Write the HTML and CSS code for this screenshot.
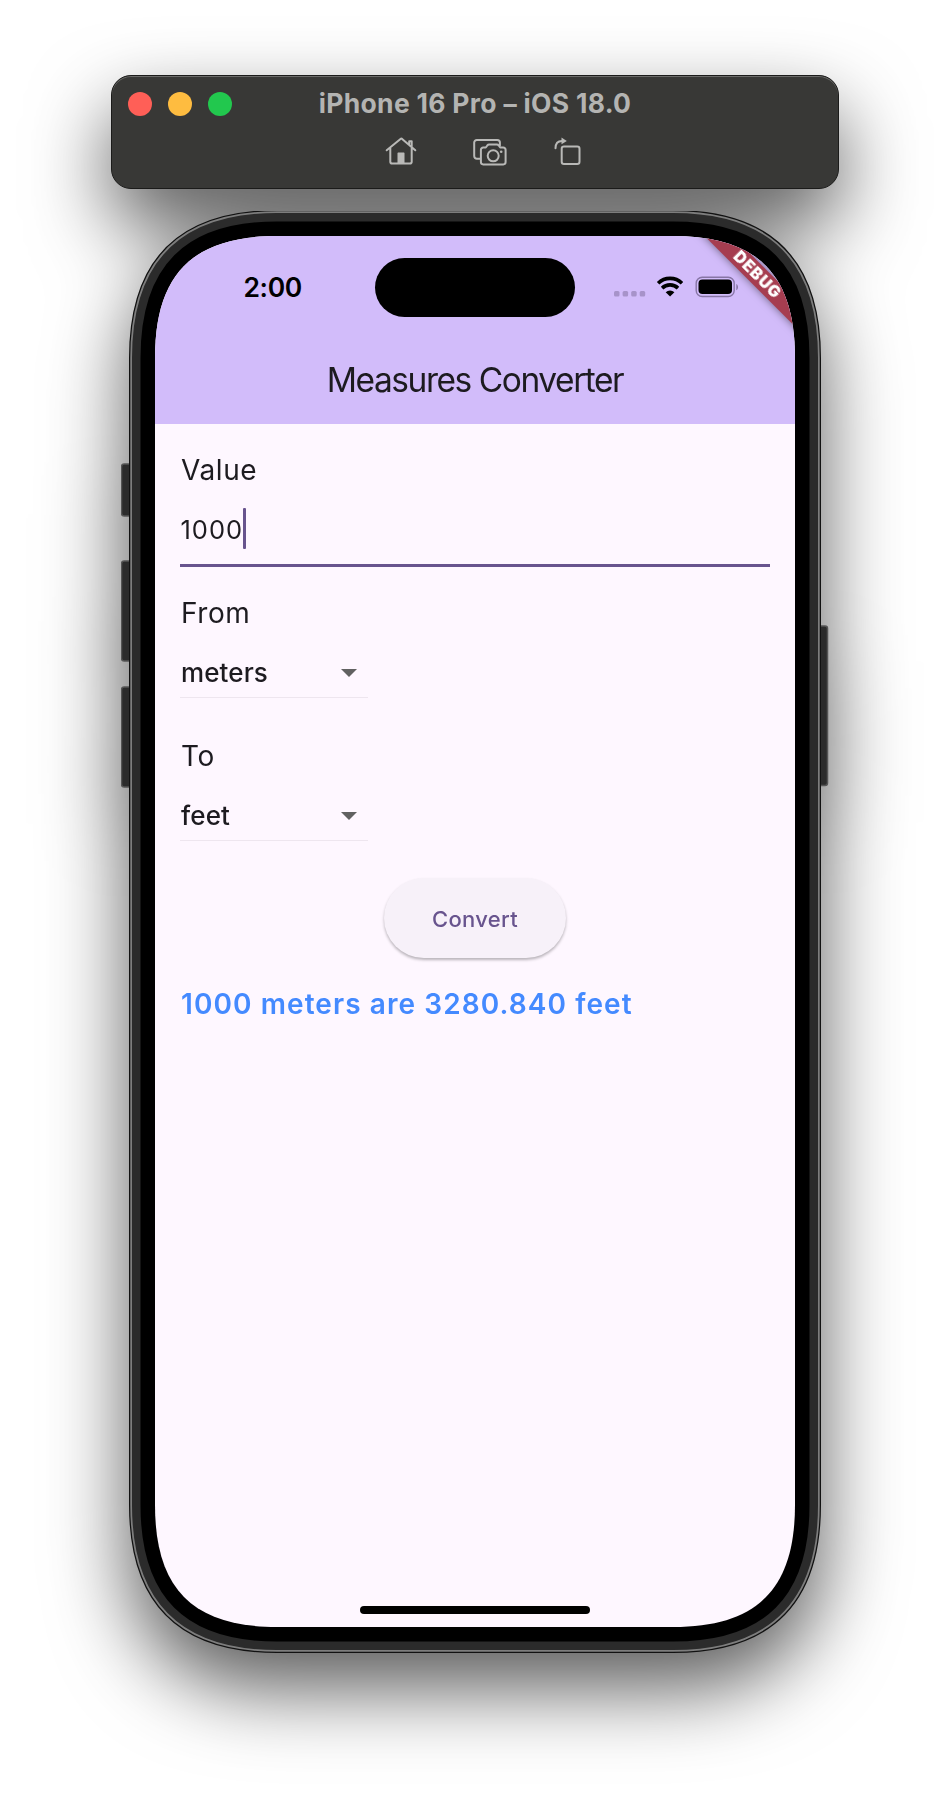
FILE: index.html
```html
<!DOCTYPE html>
<html lang="en">
<head>
<meta charset="utf-8">
<title>iPhone 16 Pro – iOS 18.0</title>
<link rel="stylesheet" href="styles.css">
</head>
<body>
<main class="simulator">
  <header class="toolbar">
    <div class="titlebar">
      <div class="lights"><i class="light close"></i><i class="light minimize"></i><i class="light expand"></i></div>
      <h1 class="window-title"><span>iPhone 16 Pro – iOS 18.0</span></h1>
    </div>
    <div class="tools">
      <svg class="tool" width="32" height="32" viewBox="0 0 32 32">
        <path d="M1.700 14.300 15.500 2.900c.5-.4 1.100-.4 1.600 0L30.300 14.300M5.300 12v13.800c0 1 .8 1.800 1.800 1.800h17.800c1 0 1.800-.8 1.800-1.800V12M24.200 9V5.200h2.500v6"/>
        <path class="solid" d="M12.500 27V17.400c0-.6.4-1 1-1h5c.6 0 1 .4 1 1V27z"/>
      </svg>
      <svg class="tool" width="34" height="32" viewBox="0 0 34 32">
        <path d="M7 22.700H3.800a2.600 2.600 0 0 1-2.600-2.600V6.600A2.600 2.600 0 0 1 3.800 4h20.500a2.600 2.600 0 0 1 2.600 2.600V9.500"/>
        <path d="M10.200 11.500h2.600l1.500-2c.5-.6 1-.9 1.700-.9h8c.7 0 1.200.3 1.700.9l1.500 2h3.100a2.300 2.300 0 0 1 2.300 2.300v12.300a2.300 2.300 0 0 1-2.300 2.300H10.200a2.300 2.300 0 0 1-2.300-2.300V13.800a2.300 2.300 0 0 1 2.300-2.300z"/>
        <circle cx="20.200" cy="19.800" r="5.500"/><circle class="solid" cx="28.200" cy="15.700" r="1.300"/>
      </svg>
      <svg class="tool" width="32" height="32" viewBox="0 0 32 32">
        <rect x="7.700" y="10.500" width="17.800" height="17.500" rx="2.300"/>
        <path d="M1.500 12.200C1.500 7.500 3.800 4.900 8 4.900"/>
        <path class="solid" d="M7.500 1.500 12.800 5 7.500 8.300z"/>
      </svg>
    </div>
  </header>

  <section class="phone">
    <svg class="frame" width="708" height="1443" viewBox="-8 0 708 1443">
      <g class="side-button">
        <rect x="-7.500" y="253" width="16" height="52" rx="2.500"/>
        <rect x="-7.500" y="350" width="16" height="100" rx="2.500"/>
        <rect x="-7.500" y="476" width="16" height="100" rx="2.500"/>
        <rect x="682.500" y="415" width="16" height="159.500" rx="2.500"/>
      </g>
      <defs><path id="bezel" d="M26 147C26 63 64 25 148 25H544C628 25 666 63 666 147V1294C666 1378 628 1416 544 1416H148C64 1416 26 1378 26 1294Z"/></defs>
      <use href="#bezel" class="band outline"/>
      <use href="#bezel" class="band rim"/>
      <use href="#bezel" class="band metal"/>
      <use href="#bezel" class="band glass"/>
    </svg>

    <div class="screen">
      <div class="appbar">
        <div class="status">
          <span class="clock">2:00</span>
          <span class="island"></span>
          <svg class="indicators" width="126" height="24" viewBox="0 0 126 24">
            <g class="cell"><rect x="0" y="15" width="5.500" height="5.500" rx="1.500"/><rect x="8.600" y="15" width="5.500" height="5.500" rx="1.500"/><rect x="17.200" y="15" width="5.500" height="5.500" rx="1.500"/><rect x="25.700" y="15" width="5.500" height="5.500" rx="1.500"/></g>
            <g class="wifi"><path d="M44.100 7.200a17.200 17.200 0 0 1 23.900 0"/><path d="M48.100 12.100a11.400 11.400 0 0 1 15.900 0"/><path class="dot" d="M51.700 16.300a6.300 6.300 0 0 1 8.700 0L56.050 20.600z"/></g>
            <rect class="shell" x="82.200" y="1.200" width="38" height="19.300" rx="6"/>
            <rect x="84.500" y="3.600" width="33.500" height="14.500" rx="4"/>
            <path class="cap" d="M122.300 8c2.300 1.200 2.300 5 0 6.200z"/>
          </svg>
        </div>
        <h2 class="app-title"><span>Measures Converter</span></h2>
      </div>

      <div class="form">
        <label class="label value-label">Value</label>
        <div class="input"><span class="number">1000</span><i class="cursor"></i></div>
        <label class="label from-label">From</label>
        <div class="select"><span>meters</span><i class="arrow"></i></div>
        <label class="label to-label">To</label>
        <div class="select"><span>feet</span><i class="arrow"></i></div>
        <button class="convert">Convert</button>
        <p class="result">1000 meters are 3280.840 feet</p>
      </div>
      <i class="home-indicator"></i>

      <svg class="banner" width="100" height="100" viewBox="0 0 100 100">
        <path class="ribbon" d="M4.500-5H32.600L110 72.400V100.500z"/>
        <text transform="translate(62.800 38.500) rotate(45)" y="6" text-anchor="middle">DEBUG</text>
      </svg>
    </div>
  </section>
</main>
</body>
</html>
```
FILE: styles.css
```css
* { box-sizing: border-box; }
body {
  margin: 0;
  height: 1804px;
  overflow: hidden;
  background: #fff;
  font-family: Inter, "Liberation Sans", sans-serif;
  color: #1d1b20;
}
h1, h2, p { margin: 0; }
.simulator {
  display: flex;
  flex-direction: column;
  align-items: center;
  gap: 22px;
  padding-top: 75px;
  filter: drop-shadow(0 36px 40px rgba(0, 0, 0, .64));
}

.toolbar {
  width: 728px;
  height: 114px;
  padding-top: 16px;
  border: 1px solid #1b1b1a;
  border-radius: 20px;
  background: #383836;
  box-shadow: inset 0 1px 0 #6b6b69;
}
.titlebar { display: grid; grid-template-columns: 160px 1fr 160px; height: 24px; align-items: center; }
.lights { display: flex; gap: 16px; padding-left: 16px; }
.light { width: 24px; height: 24px; border-radius: 50%; }
.close { background: #ff5f57; }
.minimize { background: #febc40; }
.expand { background: #22c84e; }
.window-title { height: 24px; text-align: center; white-space: nowrap; font-size: 26.500px; line-height: 22px; font-weight: 700; letter-spacing: .3px; color: #b4b4b2; }
.tools { display: flex; padding: 20px 0 0 273px; gap: 55.500px; }
.tool { fill: none; stroke: #b9b9b7; stroke-width: 2; stroke-linecap: round; stroke-linejoin: round; }
.tool:last-child { margin-left: -8px; }
.tool .solid { fill: #b9b9b7; stroke: none; }

.phone { position: relative; width: 692px; height: 1443px; padding: 25px 26px 27px; }
.frame { position: absolute; left: -8px; top: 0; }
.side-button rect { fill: #2b2b2b; stroke: #555; stroke-width: 1.5; }
.band { fill: #000; }
.outline { stroke: #111; stroke-width: 52; }
.rim { stroke: #7d7d7d; stroke-width: 49.500; }
.metal { stroke: #2b2b2b; stroke-width: 46; }
.glass { stroke: #000; stroke-width: 29; }

.screen {
  position: relative;
  height: 1391px;
  background: #fef7ff;
  clip-path: path("M0 122C0 38 38 0 122 0H518C602 0 640 38 640 122V1269C640 1353 602 1391 518 1391H122C38 1391 0 1353 0 1269Z");
}
.appbar { height: 188px; padding-top: 22px; background: #d2bcfa; }
.status { display: grid; grid-template-columns: 220px 200px 220px; height: 59px; align-items: center; }
.clock { padding: 0 0 2px 88.500px; font-size: 26.500px; font-weight: 600; letter-spacing: -.4px; color: #000; }
.island { height: 59px; border-radius: 30px; background: #000; }
.indicators { margin-left: 39px; }
.cell { fill: #a793c9; }
.wifi { fill: none; stroke: #000; stroke-width: 3.600; }
.wifi .dot { fill: #000; stroke: none; }
.shell { fill: none; stroke: #8775a5; stroke-width: 1.400; }
.cap { fill: #8775a5; }
.app-title { padding-top: 38px; font-size: 33.500px; line-height: 50px; font-weight: 380; text-align: center; letter-spacing: -1.450px; }

.form { display: flex; flex-direction: column; align-items: flex-start; padding: 26px 25px 0; }
.label { font-size: 28px; line-height: 40px; letter-spacing: .6px; padding-left: 1px; }
.input { display: flex; align-items: center; width: 590px; height: 77px; padding-top: 3px; border-bottom: 3px solid #68548e; }
.number { padding: 2px 0 0 .5px; font-size: 25.500px; letter-spacing: 1px; }
.cursor { width: 3px; height: 41px; border-radius: 1px; background: #68548e; }
.from-label, .to-label { margin-top: 26px; }
.select {
  display: flex; align-items: center; justify-content: space-between;
  width: 188px; height: 65px; padding: 15px 11px 0 1px;
  border-bottom: 1px solid #eee6ef;
  font-size: 26px; font-weight: 500; letter-spacing: .1px;
}
.to-label { margin-top: 38px; }
.arrow { border: 8px solid transparent; border-top-color: #616161; border-bottom: 0; }
.convert {
  align-self: center; width: 182px; height: 80px; margin-top: 37px; padding: 1px 0 0;
  border: 0; border-radius: 40px; background: #f7f1f9; color: #68548e;
  font: 500 22px/80px Inter, sans-serif; letter-spacing: .3px;
  box-shadow: 0 2px 3px rgba(0, 0, 0, .28);
}
.result { margin-top: 26px; padding-left: 1px; font-size: 28px; line-height: 40px; font-weight: 600; letter-spacing: 1.080px; color: #448aff; white-space: nowrap; }
.home-indicator { position: absolute; left: 205px; bottom: 13px; width: 230px; height: 8px; border-radius: 4px; background: #000; }

.banner { position: absolute; right: 0; top: 0; overflow: visible; }
.ribbon { fill: #a63d50; filter: drop-shadow(0 0 4px rgba(0, 0, 0, .5)); }
.banner text { font-size: 16px; font-weight: 900; letter-spacing: .9px; fill: #fff; }
```
